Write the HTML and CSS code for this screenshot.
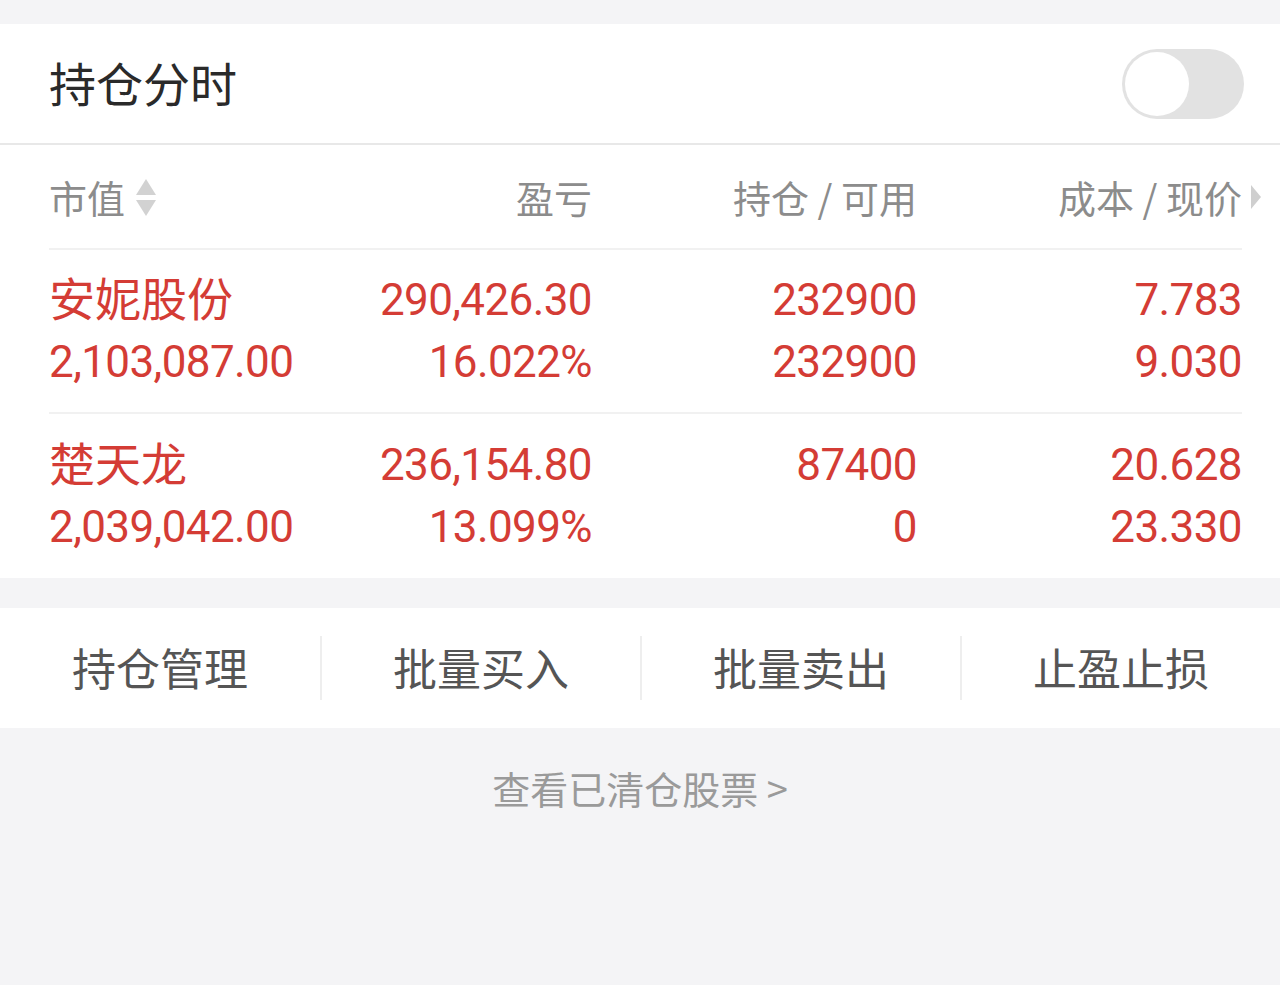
FILE: index.html
```html
<!DOCTYPE html>
<html lang="zh-CN">
<head>
    <meta charset="UTF-8">
    <meta name="viewport" content="width=device-width, initial-scale=1.0">
    <title>持仓</title>
    <link rel="stylesheet" href="styles.css">
</head>
<body>

    <div class="top-gap"></div>

    <div class="panel">
        <div class="title-bar">
            <span class="title">持仓分时</span>
            <div class="switch"><div class="knob"></div></div>
        </div>

        <div class="list">
            <div class="list-head">
                <div class="cell left">
                    市值
                    <svg class="sort" width="22" height="40" viewBox="0 0 22 40">
                        <polygon points="11,1 21,17 1,17" fill="#d2d2d2"/>
                        <polygon points="1,22 21,22 11,38" fill="#d2d2d2"/>
                    </svg>
                </div>
                <div class="cell">盈亏</div>
                <div class="cell">持仓 / 可用</div>
                <div class="cell">
                    成本 / 现价
                    <svg class="more" width="12" height="26" viewBox="0 0 12 26">
                        <polygon points="1,1 11,13 1,25" fill="#cfcfcf"/>
                    </svg>
                </div>
            </div>

            <div class="stock-row">
                <div class="cell left"><span class="name">安妮股份</span><span class="num">2,103,087.00</span></div>
                <div class="cell"><span class="num">290,426.30</span><span class="num">16.022%</span></div>
                <div class="cell"><span class="num">232900</span><span class="num">232900</span></div>
                <div class="cell"><span class="num">7.783</span><span class="num">9.030</span></div>
            </div>

            <div class="stock-row last">
                <div class="cell left"><span class="name">楚天龙</span><span class="num">2,039,042.00</span></div>
                <div class="cell"><span class="num">236,154.80</span><span class="num">13.099%</span></div>
                <div class="cell"><span class="num">87400</span><span class="num">0</span></div>
                <div class="cell"><span class="num">20.628</span><span class="num">23.330</span></div>
            </div>
        </div>
    </div>

    <div class="actions">
        <div class="action">持仓管理</div>
        <div class="action">批量买入</div>
        <div class="action">批量卖出</div>
        <div class="action">止盈止损</div>
    </div>

    <div class="cleared">查看已清仓股票 &gt;</div>

</body>
</html>
```

FILE: styles.css
```css
body {
    margin: 0;
    background-color: #f4f4f6;
    font-family: "Noto Sans CJK SC", "Noto Sans", sans-serif;
    width: 1280px;
    height: 985px;
    overflow: hidden;
}

.top-gap {
    height: 24px;
}

.panel {
    background-color: #fff;
}

.title-bar {
    height: 119px;
    display: flex;
    align-items: center;
    justify-content: space-between;
    padding: 0 36px 0 49px;
    border-bottom: 2px solid #e8e8e8;
}

.title {
    font-size: 47px;
    color: #2a2a2a;
    line-height: 1;
    margin-top: -4px;
}

.switch {
    width: 122px;
    height: 70px;
    border-radius: 35px;
    background-color: #e2e2e2;
    display: flex;
    align-items: center;
    padding-left: 3px;
    box-sizing: border-box;
}

.knob {
    width: 64px;
    height: 64px;
    border-radius: 50%;
    background-color: #fff;
}

.list {
    padding: 0 38px 0 49px;
}

.list-head,
.stock-row {
    display: grid;
    grid-template-columns: 253px 290px 325px 325px;
}

.list-head {
    height: 103px;
    align-items: center;
    border-bottom: 2px solid #f1f1f1;
    font-size: 38px;
    color: #8c8c8c;
}

.list-head .cell {
    display: flex;
    align-items: center;
    justify-content: flex-end;
    white-space: nowrap;
}

.list-head .cell.left {
    justify-content: flex-start;
}

.sort {
    margin-left: 10px;
    margin-top: 2px;
}

.more {
    margin-left: 8px;
    margin-right: -20px;
}

.stock-row {
    height: 162px;
    align-items: center;
    border-bottom: 2px solid #f1f1f1;
    color: #d43c35;
}

.stock-row.last {
    height: 164px;
    border-bottom: none;
}

.stock-row .cell {
    display: flex;
    flex-direction: column;
    align-items: flex-end;
    white-space: nowrap;
}

.stock-row .cell.left {
    align-items: flex-start;
}

.name {
    font-size: 46px;
    line-height: 62px;
    margin-top: -4px;
}

.num {
    font-family: Roboto, "Noto Sans", sans-serif;
    font-size: 44px;
    line-height: 62px;
    letter-spacing: -0.6px;
}

.name + .num {
    margin-top: 4px;
}

.actions {
    margin-top: 30px;
    height: 120px;
    background-color: #fff;
    display: grid;
    grid-template-columns: repeat(4, 1fr);
    align-items: center;
}

.action {
    text-align: center;
    font-size: 44px;
    color: #555;
    line-height: 62px;
    padding-bottom: 2px;
    border-left: 2px solid #eeeeee;
}

.action:first-child {
    border-left: none;
}

.cleared {
    text-align: center;
    font-size: 38px;
    color: #9a9a9a;
    padding-top: 32px;
}
```
